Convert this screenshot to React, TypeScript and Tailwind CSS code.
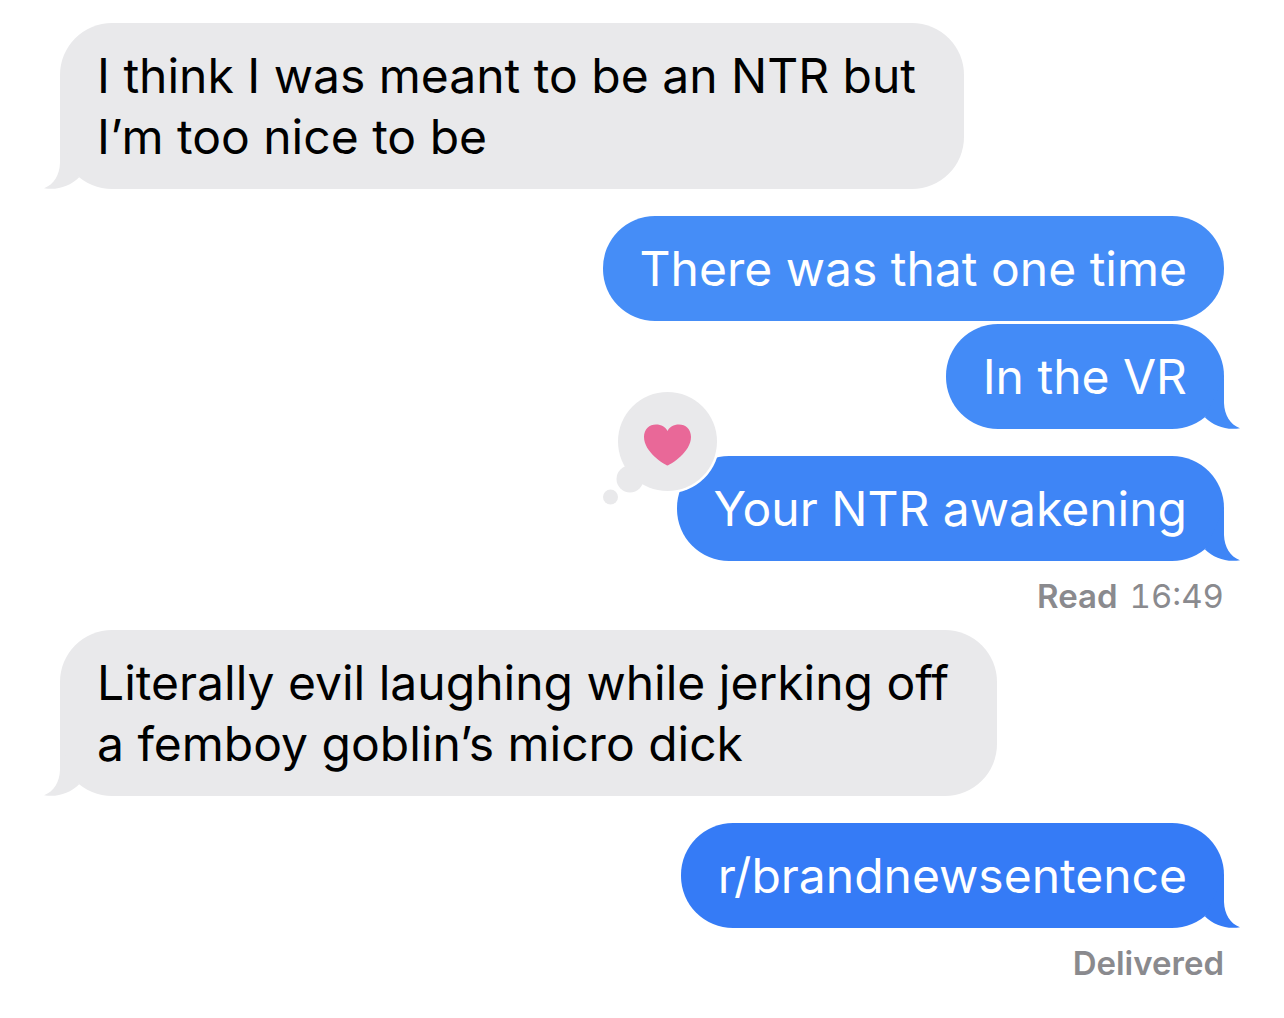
import React from 'react';

interface BubbleProps {
    color: string;
    tail?: boolean;
    children: React.ReactNode;
}

const Received: React.FC<{ children: React.ReactNode }> = ({ children }) => {
    return (
        <div className="relative mr-auto w-fit rounded-[52px] bg-[#e9e9eb] py-[22px] pl-[37px] pr-[48px] text-black">
            <p>{children}</p>
            <svg
                className="absolute -left-4 bottom-0 h-[52px] w-[38px] -scale-x-100 text-[#e9e9eb]"
                viewBox="0 0 38 52"
                aria-hidden="true"
            >
                <path fill="currentColor" d="M22 0V26C22.5 38 28 47.5 38 51.3C24 53.5 12 49 3 40.5Z" />
            </svg>
        </div>
    );
};

const Sent: React.FC<BubbleProps> = ({ color, tail = true, children }) => {
    return (
        <div className={`relative ml-auto w-fit rounded-[52px] px-[37px] py-[22px] text-white ${color}`}>
            {children}
            {tail && (
                <svg className="absolute -right-4 bottom-0 h-[52px] w-[38px]" viewBox="0 0 38 52" aria-hidden="true">
                    <path
                        fill="currentColor"
                        className="tail"
                        d="M22 0V26C22.5 38 28 47.5 38 51.3C24 53.5 12 49 3 40.5Z"
                    />
                </svg>
            )}
        </div>
    );
};

const HeartReaction: React.FC = () => {
    return (
        <svg
            className="absolute -left-[77px] -top-[68px] h-[120px] w-[120px]"
            viewBox="0 0 120 120"
            role="img"
            aria-label="Loved"
        >
            <circle cx="67.5" cy="53.5" r="52" fill="#fff" />
            <g fill="#e9e9eb">
                <circle cx="67.5" cy="53.5" r="49.5" />
                <circle cx="30" cy="91" r="13.5" />
                <circle cx="10.5" cy="109" r="7.5" />
            </g>
            <path
                fill="#e96898"
                d="M67.5 77.5C64 76.5 44 64 44 49C44 41 49.5 36.5 56 36.5C61.5 36.5 65.5 39 67.5 43C69.5 39 73.5 36.5 79 36.5C85.5 36.5 91 41 91 49C91 64 71 76.5 67.5 77.5Z"
            />
        </svg>
    );
};

const App: React.FC = () => {
    return (
        <main className="min-h-screen bg-white px-[60px] pb-8 pt-[23px] font-['Inter',sans-serif] text-[48px] leading-[61px]">
            <Received>
                I think I was meant to be an NTR but
                <br />
                I’m too nice to be
            </Received>

            {/* Sent group */}
            <div className="mt-[27px] flex flex-col gap-[3px]">
                <Sent color="bg-[#458df7] [&_.tail]:text-[#458df7]" tail={false}>
                    <p>There was that one time</p>
                </Sent>
                <Sent color="bg-[#438bf7] [&_.tail]:text-[#438bf7]">
                    <p>In the VR</p>
                </Sent>
            </div>

            <div className="mt-[27px]">
                <Sent color="bg-[#3e85f6] [&_.tail]:text-[#3e85f6]">
                    <p>Your NTR awakening</p>
                    <HeartReaction />
                </Sent>
            </div>
            <p className="flex justify-end gap-3 pb-[14px] pt-[15px] text-[33px] leading-[40px] text-[#8a8a8e]">
                <span className="font-semibold">Read</span>
                <time className="tabular-nums">16:49</time>
            </p>

            <Received>
                Literally evil laughing while jerking off
                <br />a femboy goblin’s micro dick
            </Received>

            <div className="mt-[27px]">
                <Sent color="bg-[#357bf6] [&_.tail]:text-[#357bf6]">
                    <p>r/brandnewsentence</p>
                </Sent>
            </div>
            <p className="pt-[15px] text-right text-[33px] font-semibold leading-[40px] text-[#8a8a8e]">Delivered</p>
        </main>
    );
};

export default App;
